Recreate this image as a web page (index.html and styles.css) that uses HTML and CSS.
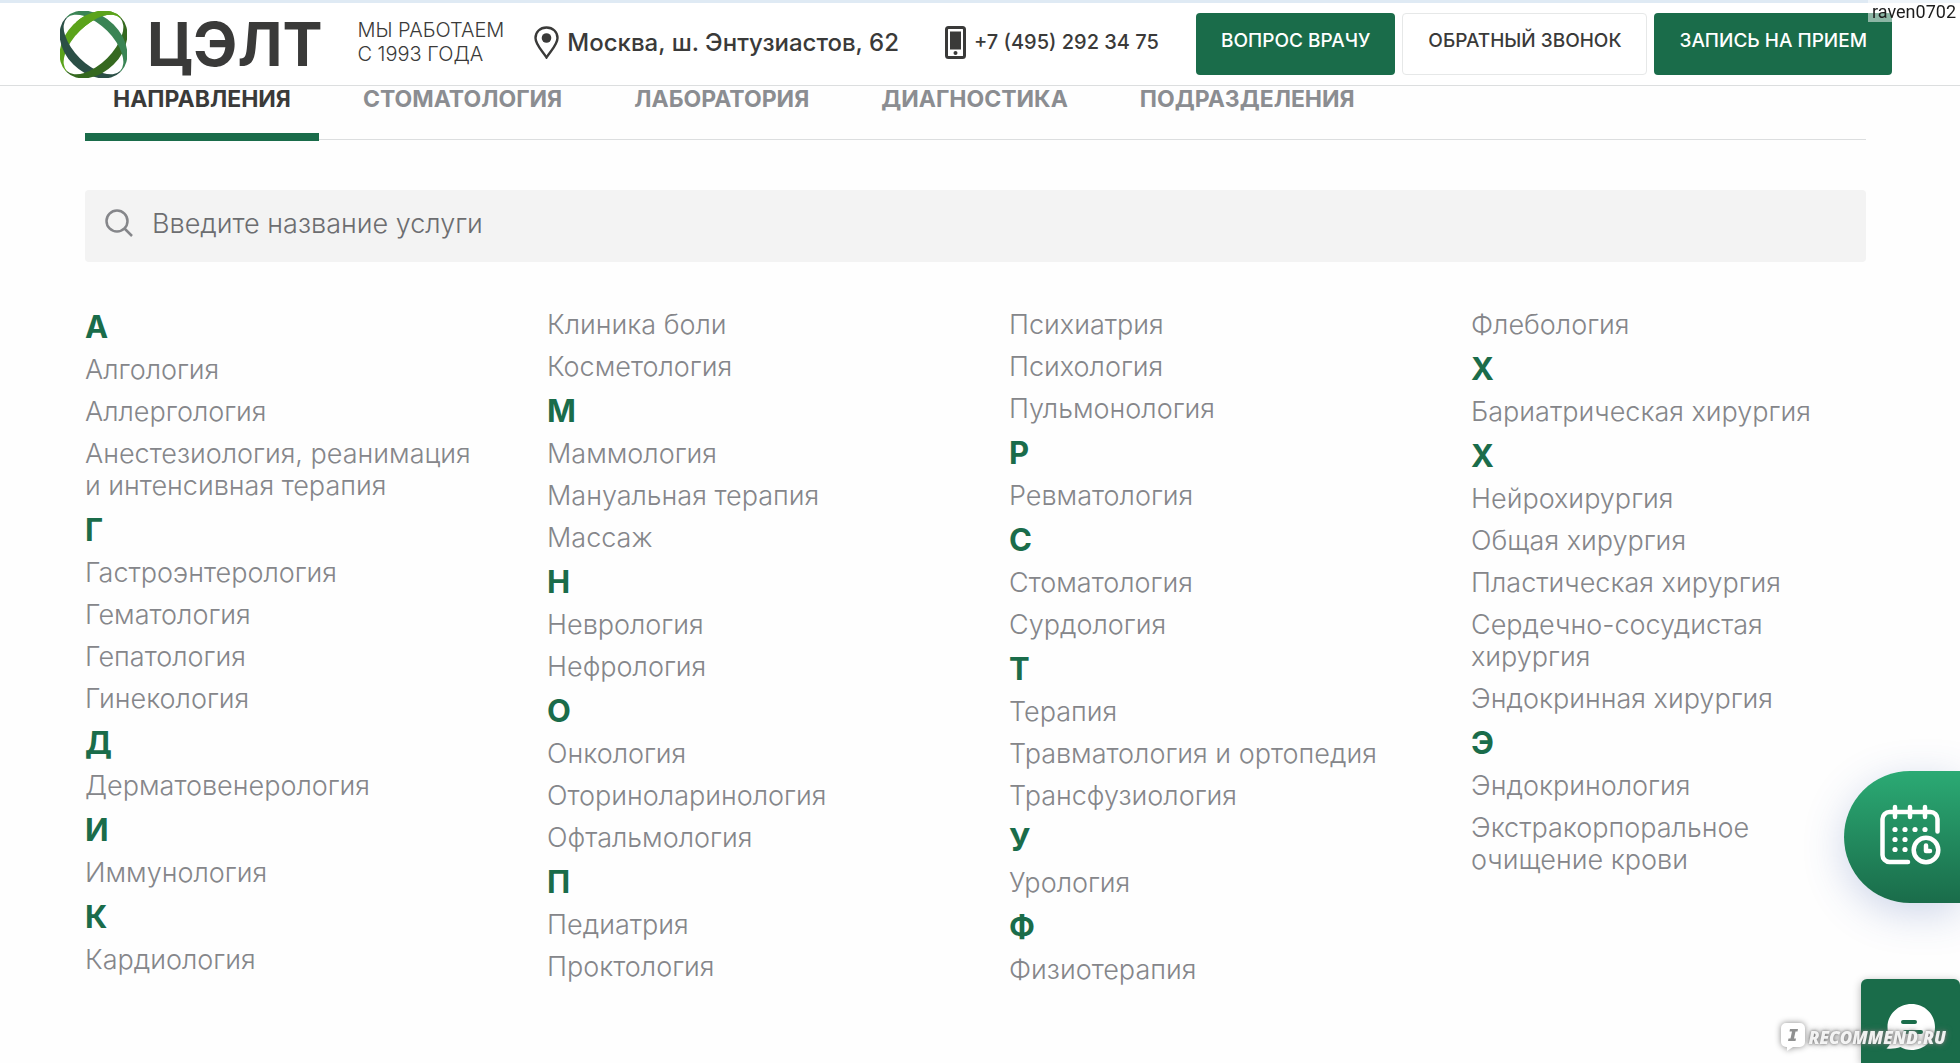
FILE: index.html
```html
<!DOCTYPE html>
<html lang="ru">
<head>
<meta charset="utf-8">
<meta name="viewport" content="width=device-width, initial-scale=1">
<title>ЦЭЛТ</title>
<link rel="stylesheet" href="styles.css">
</head>
<body>
<header class="header">
  <a class="logo" href="#">
    <svg class="logo-mark" viewBox="0 0 66 66" aria-hidden="true">
      <defs>
        <path id="ribbon" d="M-38 0A38 28 0 0 1 38 0L37 0A37 19 0 0 0 -37 0Z"/>
        <clipPath id="top-crossing"><path d="M16 0H66V30H16Z"/></clipPath>
      </defs>
      <use href="#ribbon" transform="translate(33 33) rotate(-45)" fill="#5ba31b"/>
      <use href="#ribbon" transform="translate(33 33) rotate(225)" fill="#2b4f46"/>
      <use href="#ribbon" transform="translate(33 33) rotate(135)" fill="#35691f"/>
      <use href="#ribbon" transform="translate(33 33) rotate(45)" fill="#3a8454"/>
      <g clip-path="url(#top-crossing)"><use href="#ribbon" transform="translate(33 33) rotate(-45)" fill="#5ba31b"/></g>
    </svg>
    <span class="logo-name">ЦЭЛТ</span>
  </a>
  <p class="since">МЫ РАБОТАЕМ<br>С 1993 ГОДА</p>
  <a class="contact address" href="#">
    <svg class="pin" viewBox="0 0 25 33" aria-hidden="true"><path d="M12.500 1.500C6 1.500 1.500 6 1.500 12c0 7 7.500 13.500 11 19.500C16 25.500 23.500 19 23.500 12 23.500 6 19 1.500 12.500 1.500Z" fill="none" stroke="#3a3a39" stroke-width="2.400"/><circle cx="12.500" cy="12" r="4.800" fill="#3a3a39"/></svg>
    Москва, ш. Энтузиастов, 62
  </a>
  <a class="contact phone" href="tel:+74952923475">
    <svg class="mobile" viewBox="0 0 21 33" aria-hidden="true"><rect x="1.500" y="1.500" width="18" height="30" rx="2" fill="#fff" stroke="#3a3a39" stroke-width="3"/><path d="M5 5.500H16V23.500H5Z" fill="#3a3a39"/><circle cx="10.500" cy="27" r="2" fill="#3a3a39"/></svg>
    +7 (495) 292 34 75
  </a>
  <div class="actions">
    <button class="btn btn-green" type="button">ВОПРОС ВРАЧУ</button>
    <button class="btn" type="button">ОБРАТНЫЙ ЗВОНОК</button>
    <button class="btn btn-green" type="button">ЗАПИСЬ НА ПРИЕМ</button>
  </div>
</header>

<main class="content">
  <nav class="tabs">
    <a class="tab active" href="#">НАПРАВЛЕНИЯ</a>
    <a class="tab" href="#">СТОМАТОЛОГИЯ</a>
    <a class="tab" href="#">ЛАБОРАТОРИЯ</a>
    <a class="tab" href="#">ДИАГНОСТИКА</a>
    <a class="tab" href="#">ПОДРАЗДЕЛЕНИЯ</a>
  </nav>

  <form class="search">
    <label for="service" aria-label="Поиск услуги">
      <svg class="search-icon" viewBox="0 0 28 28" aria-hidden="true"><circle cx="12" cy="12" r="10.500"/><path d="M19.500 19.500L27 27"/></svg>
    </label>
    <input id="service" type="text" placeholder="Введите название услуги">
  </form>

  <div class="columns">
    <ul class="list">
      <li class="letter">А</li>
      <li><a href="#">Алгология</a></li>
      <li><a href="#">Аллергология</a></li>
      <li><a href="#">Анестезиология, реанимация и интенсивная терапия</a></li>
      <li class="letter">Г</li>
      <li><a href="#">Гастроэнтерология</a></li>
      <li><a href="#">Гематология</a></li>
      <li><a href="#">Гепатология</a></li>
      <li><a href="#">Гинекология</a></li>
      <li class="letter">Д</li>
      <li><a href="#">Дерматовенерология</a></li>
      <li class="letter">И</li>
      <li><a href="#">Иммунология</a></li>
      <li class="letter">К</li>
      <li><a href="#">Кардиология</a></li>
    </ul>
    <ul class="list">
      <li><a href="#">Клиника боли</a></li>
      <li><a href="#">Косметология</a></li>
      <li class="letter">М</li>
      <li><a href="#">Маммология</a></li>
      <li><a href="#">Мануальная терапия</a></li>
      <li><a href="#">Массаж</a></li>
      <li class="letter">Н</li>
      <li><a href="#">Неврология</a></li>
      <li><a href="#">Нефрология</a></li>
      <li class="letter">О</li>
      <li><a href="#">Онкология</a></li>
      <li><a href="#">Оториноларинология</a></li>
      <li><a href="#">Офтальмология</a></li>
      <li class="letter">П</li>
      <li><a href="#">Педиатрия</a></li>
      <li><a href="#">Проктология</a></li>
    </ul>
    <ul class="list">
      <li><a href="#">Психиатрия</a></li>
      <li><a href="#">Психология</a></li>
      <li><a href="#">Пульмонология</a></li>
      <li class="letter">Р</li>
      <li><a href="#">Ревматология</a></li>
      <li class="letter">С</li>
      <li><a href="#">Стоматология</a></li>
      <li><a href="#">Сурдология</a></li>
      <li class="letter">Т</li>
      <li><a href="#">Терапия</a></li>
      <li><a href="#">Травматология и ортопедия</a></li>
      <li><a href="#">Трансфузиология</a></li>
      <li class="letter">У</li>
      <li><a href="#">Урология</a></li>
      <li class="letter">Ф</li>
      <li><a href="#">Физиотерапия</a></li>
    </ul>
    <ul class="list">
      <li><a href="#">Флебология</a></li>
      <li class="letter">Х</li>
      <li><a href="#">Бариатрическая хирургия</a></li>
      <li class="letter">Х</li>
      <li><a href="#">Нейрохирургия</a></li>
      <li><a href="#">Общая хирургия</a></li>
      <li><a href="#">Пластическая хирургия</a></li>
      <li><a href="#">Сердечно-сосудистая хирургия</a></li>
      <li><a href="#">Эндокринная хирургия</a></li>
      <li class="letter">Э</li>
      <li><a href="#">Эндокринология</a></li>
      <li><a href="#">Экстракорпоральное очищение крови</a></li>
    </ul>
  </div>
</main>

<button class="booking" type="button" aria-label="Запись на прием">
  <svg viewBox="0 0 80 80" aria-hidden="true">
    <g fill="none" stroke="#fff" stroke-width="4.500" stroke-linecap="round" stroke-linejoin="round">
      <path d="M67.500 34.500V22a7 7 0 0 0-7-7H19.500a7 7 0 0 0-7 7V58a7 7 0 0 0 7 7H38M25 10V20M40 10V20M55 10V20"/>
      <circle cx="56" cy="53" r="12.300"/>
      <path d="M56 48.500V54H60"/>
    </g>
    <g fill="#fff"><circle cx="25" cy="32.500" r="2.600"/><circle cx="35" cy="32.500" r="2.600"/><circle cx="45" cy="32.500" r="2.600"/><circle cx="55" cy="32.500" r="2.600"/><circle cx="25" cy="42.500" r="2.600"/><circle cx="35" cy="42.500" r="2.600"/><circle cx="25" cy="52.500" r="2.600"/><circle cx="35" cy="52.500" r="2.600"/></g>
  </svg>
</button>
<button class="chat" type="button" aria-label="Чат">
  <svg viewBox="0 0 50 46" aria-hidden="true"><path d="M25.500 0C38.500 0 49 10 49 23S38.500 46 25.500 46c-4 0-8-1-11-3-4 1.500-9 2-14 1.500 2.500-2 4-5 4-8C2.500 33 1.500 28 1.500 23 1.500 10 12.500 0 25.500 0Z" fill="#fff"/><path d="M17 18H29M19 28H35" stroke="#1a6c4a" stroke-width="4" stroke-linecap="round"/></svg>
</button>

<div class="watermark">
  <svg viewBox="0 0 26 28" aria-hidden="true"><path d="M6 0H20a5 5 0 0 1 5 5V19a5 5 0 0 1-5 5H13L7 28V24H6a5 5 0 0 1-5-5V5a5 5 0 0 1 5-5Z" fill="#fff"/><path d="M10 6H18L17.500 8.500H15.500L14 15.500H16L15.500 18H8L8.500 15.500H10.500L12 8.500H9.500Z" fill="#8f9090"/></svg>
  <span>RECOMMEND.RU</span>
</div>
<div class="username">raven0702</div>
</body>
</html>
```
FILE: styles.css
```css
* {
  box-sizing: border-box;
}

body {
  margin: 0;
  min-height: 100vh;
  background: #fefefe;
  color: #3a3a39;
  font-family: Inter, "Open Sans", sans-serif;
  overflow-x: hidden;
}

a {
  color: inherit;
  text-decoration: none;
}

button {
  border: 0;
  font-family: inherit;
  cursor: pointer;
}

.header {
  display: flex;
  align-items: center;
  height: 86px;
  padding: 0 68px 0 60px;
  border-top: 3px solid #dfeaf4;
  border-bottom: 1px solid #dcdedf;
  background: #fff;
  white-space: nowrap;
}

.header svg {
  flex: none;
}

.logo {
  display: flex;
  align-items: center;
  gap: 20px;
}

.logo-mark {
  width: 67px;
  height: 67px;
}

.logo-name {
  font-size: 60px;
  font-weight: 700;
  line-height: 66px;
}

.since {
  margin: 0 0 4px 35px;
  font-size: 20px;
  font-weight: 300;
  line-height: 24px;
}

.contact {
  display: flex;
  align-items: center;
  padding-bottom: 4px;
}

.address {
  gap: 8px;
  margin-left: 30px;
  font-size: 24px;
  font-weight: 500;
}

.pin {
  width: 25px;
  height: 33px;
}

.phone {
  gap: 8px;
  margin-left: 46px;
  font-size: 20px;
  font-weight: 500;
}

.mobile {
  width: 21px;
  height: 33px;
}

.actions {
  display: flex;
  gap: 7px;
  margin-left: auto;
}

.btn {
  height: 62px;
  padding: 0 25px 8px;
  border: 1px solid #e6e8e8;
  border-radius: 4px;
  background: #fff;
  color: #3a3a39;
  font-size: 19px;
  font-weight: 500;
}

.btn-green {
  border: 0;
  background: #1a6c4a;
  color: #fff;
}

.content {
  padding: 0 94px 60px 85px;
}

.tabs {
  display: flex;
  gap: 16px;
  border-bottom: 1px solid #dcdedf;
}

.tab {
  margin-bottom: -2px;
  padding: 0 28px 21px;
  border-bottom: 8px solid transparent;
  color: #8b8d91;
  font-size: 23px;
  font-weight: 700;
  line-height: 26px;
}

.tab.active {
  border-color: #1a6c4a;
  color: #3a3a39;
}

.search {
  display: flex;
  align-items: center;
  gap: 19px;
  height: 72px;
  margin-top: 50px;
  padding: 0 20px 6px;
  border-radius: 4px;
  background: #f3f3f3;
}

.search-icon {
  display: block;
  width: 28px;
  height: 28px;
  fill: none;
  stroke: #85868a;
  stroke-width: 2.5;
}

.search input {
  flex: 1;
  padding: 0;
  border: 0;
  outline: 0;
  background: none;
  color: #3a3a39;
  font-family: inherit;
  font-size: 27px;
  font-weight: 300;
}

.search input::placeholder {
  color: #6c6d70;
}

.columns {
  display: grid;
  grid-template-columns: repeat(4, 1fr);
  gap: 67px;
  margin-top: 47px;
}

.list {
  margin: 0;
  padding: 0;
  list-style: none;
  color: #85868a;
  font-size: 27px;
  font-weight: 300;
  line-height: 32px;
}

.list li {
  margin-bottom: 10px;
}

.list .letter {
  margin-bottom: 9px;
  color: #1a6c4a;
  font-size: 31px;
  font-weight: 700;
  line-height: 36px;
}

.booking {
  position: fixed;
  right: 0;
  bottom: 160px;
  width: 116px;
  height: 132px;
  padding: 0 0 0 26px;
  border-radius: 66px 0 0 66px;
  background: linear-gradient(#2baa74, #1a6c4a);
  box-shadow: 0 10px 40px rgba(60, 90, 170, 0.25);
}

.booking svg {
  display: block;
  width: 80px;
  height: 80px;
}

.chat {
  position: fixed;
  right: 0;
  bottom: 0;
  width: 99px;
  height: 84px;
  padding: 14px 0 0;
  border-radius: 6px 6px 0 0;
  background: #1a6c4a;
  box-shadow: 0 2px 8px rgba(0, 0, 0, 0.3);
}

.chat svg {
  width: 50px;
  height: 46px;
}

.watermark {
  position: fixed;
  right: 14px;
  bottom: 12px;
  display: flex;
  align-items: center;
  gap: 2px;
  color: rgba(255, 255, 255, 0.9);
  font-family: "Open Sans", sans-serif;
  font-size: 17px;
  font-style: italic;
  font-weight: 800;
  text-shadow: 0 0 3px #777, 0 0 6px #777;
}

.watermark svg {
  width: 26px;
  height: 28px;
  filter: drop-shadow(0 0 3px #888);
}

.username {
  position: fixed;
  top: 0;
  right: 0;
  padding: 2px 4px 1px;
  background: rgba(255, 255, 255, 0.5);
  color: #1c1c1c;
  font-family: Roboto, sans-serif;
  font-size: 18px;
  line-height: 19px;
}
```
